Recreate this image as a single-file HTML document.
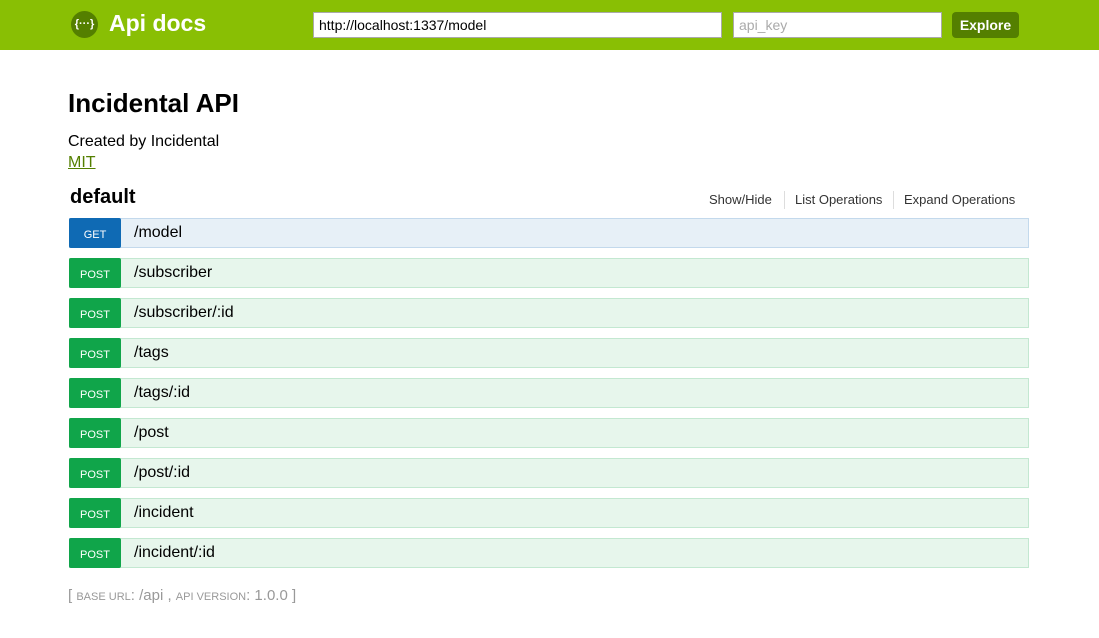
<!DOCTYPE html>
<html><head><meta charset="utf-8"><style>
*{margin:0;padding:0;box-sizing:border-box}
body{width:1099px;height:638px;background:#fff;font-family:"Liberation Sans","DejaVu Sans",sans-serif;position:relative;overflow:hidden;color:#000}
.hdr{position:absolute;left:0;top:0;width:1099px;height:50px;background:#89bf04}
.logo{position:absolute;left:71px;top:11px;width:27px;height:27px;border-radius:50%;background:#547f00;color:#fff;font-size:11px;font-weight:bold;text-align:center;line-height:27px}
.title{position:absolute;left:109px;top:10px;color:#fff;font-size:23px;font-weight:bold}
.in{position:absolute;top:12px;height:26px;background:#fff;border:1px solid #aaa;font-size:14px;padding:4px 5px;line-height:16px}
.btn{position:absolute;left:952px;top:12px;width:67px;height:26px;background:#547f00;border-radius:4px;color:#fff;font-weight:bold;font-size:14px;text-align:center;line-height:26px}
.h1{position:absolute;left:68px;top:88px;font-size:26px;font-weight:bold}
.t{position:absolute;left:68px;font-size:16px}
.def{position:absolute;left:70px;top:186px;font-size:20px;font-weight:bold}
.ops{position:absolute;top:192px;font-size:13px;color:#333}
.sep{position:absolute;top:191px;width:1px;height:18px;background:#ddd}
.row{position:absolute;left:69px;width:960px;height:30px;border:1px solid #c3e8d1;background:#e7f6ec}
.row.g{border-color:#c3d9ec;background:#e7f0f7}
.m{position:absolute;left:-1px;top:-1px;width:52px;height:30px;background:#10a54a;color:#fff;font-size:11px;text-align:center;line-height:30px;padding-top:2px;border-radius:2px}
.g .m{background:#0f6ab4}
.p{position:absolute;left:64px;top:5px;font-size:16px}
.foot{position:absolute;left:68px;top:587px;color:#999;font-size:15px}
.sc{font-size:11px;text-transform:uppercase}
</style></head><body>
<div class="hdr">
<div class="logo">{···}</div>
<div class="title">Api docs</div>
<div class="in" style="left:313px;width:409px">http://localhost:1337/model</div>
<div class="in" style="left:733px;width:209px;color:#aaa">api_key</div>
<div class="btn">Explore</div>
</div>
<div class="h1">Incidental API</div>
<div class="t" style="top:133px">Created by Incidental</div>
<div class="t" style="top:154px;color:#547f00;text-decoration:underline">MIT</div>
<div class="def">default</div>
<div class="ops" style="left:709px">Show/Hide</div>
<div class="sep" style="left:784px"></div>
<div class="ops" style="left:795px">List Operations</div>
<div class="sep" style="left:893px"></div>
<div class="ops" style="left:904px">Expand Operations</div>

<div class="row g" style="top:218px"><div class="m">GET</div><div class="p">/model</div></div>
<div class="row" style="top:258px"><div class="m">POST</div><div class="p">/subscriber</div></div>
<div class="row" style="top:298px"><div class="m">POST</div><div class="p">/subscriber/:id</div></div>
<div class="row" style="top:338px"><div class="m">POST</div><div class="p">/tags</div></div>
<div class="row" style="top:378px"><div class="m">POST</div><div class="p">/tags/:id</div></div>
<div class="row" style="top:418px"><div class="m">POST</div><div class="p">/post</div></div>
<div class="row" style="top:458px"><div class="m">POST</div><div class="p">/post/:id</div></div>
<div class="row" style="top:498px"><div class="m">POST</div><div class="p">/incident</div></div>
<div class="row" style="top:538px"><div class="m">POST</div><div class="p">/incident/:id</div></div>

<div class="foot">[ <span class="sc">Base url</span>: /api , <span class="sc">api version</span>: 1.0.0 ]</div>
</body></html>
